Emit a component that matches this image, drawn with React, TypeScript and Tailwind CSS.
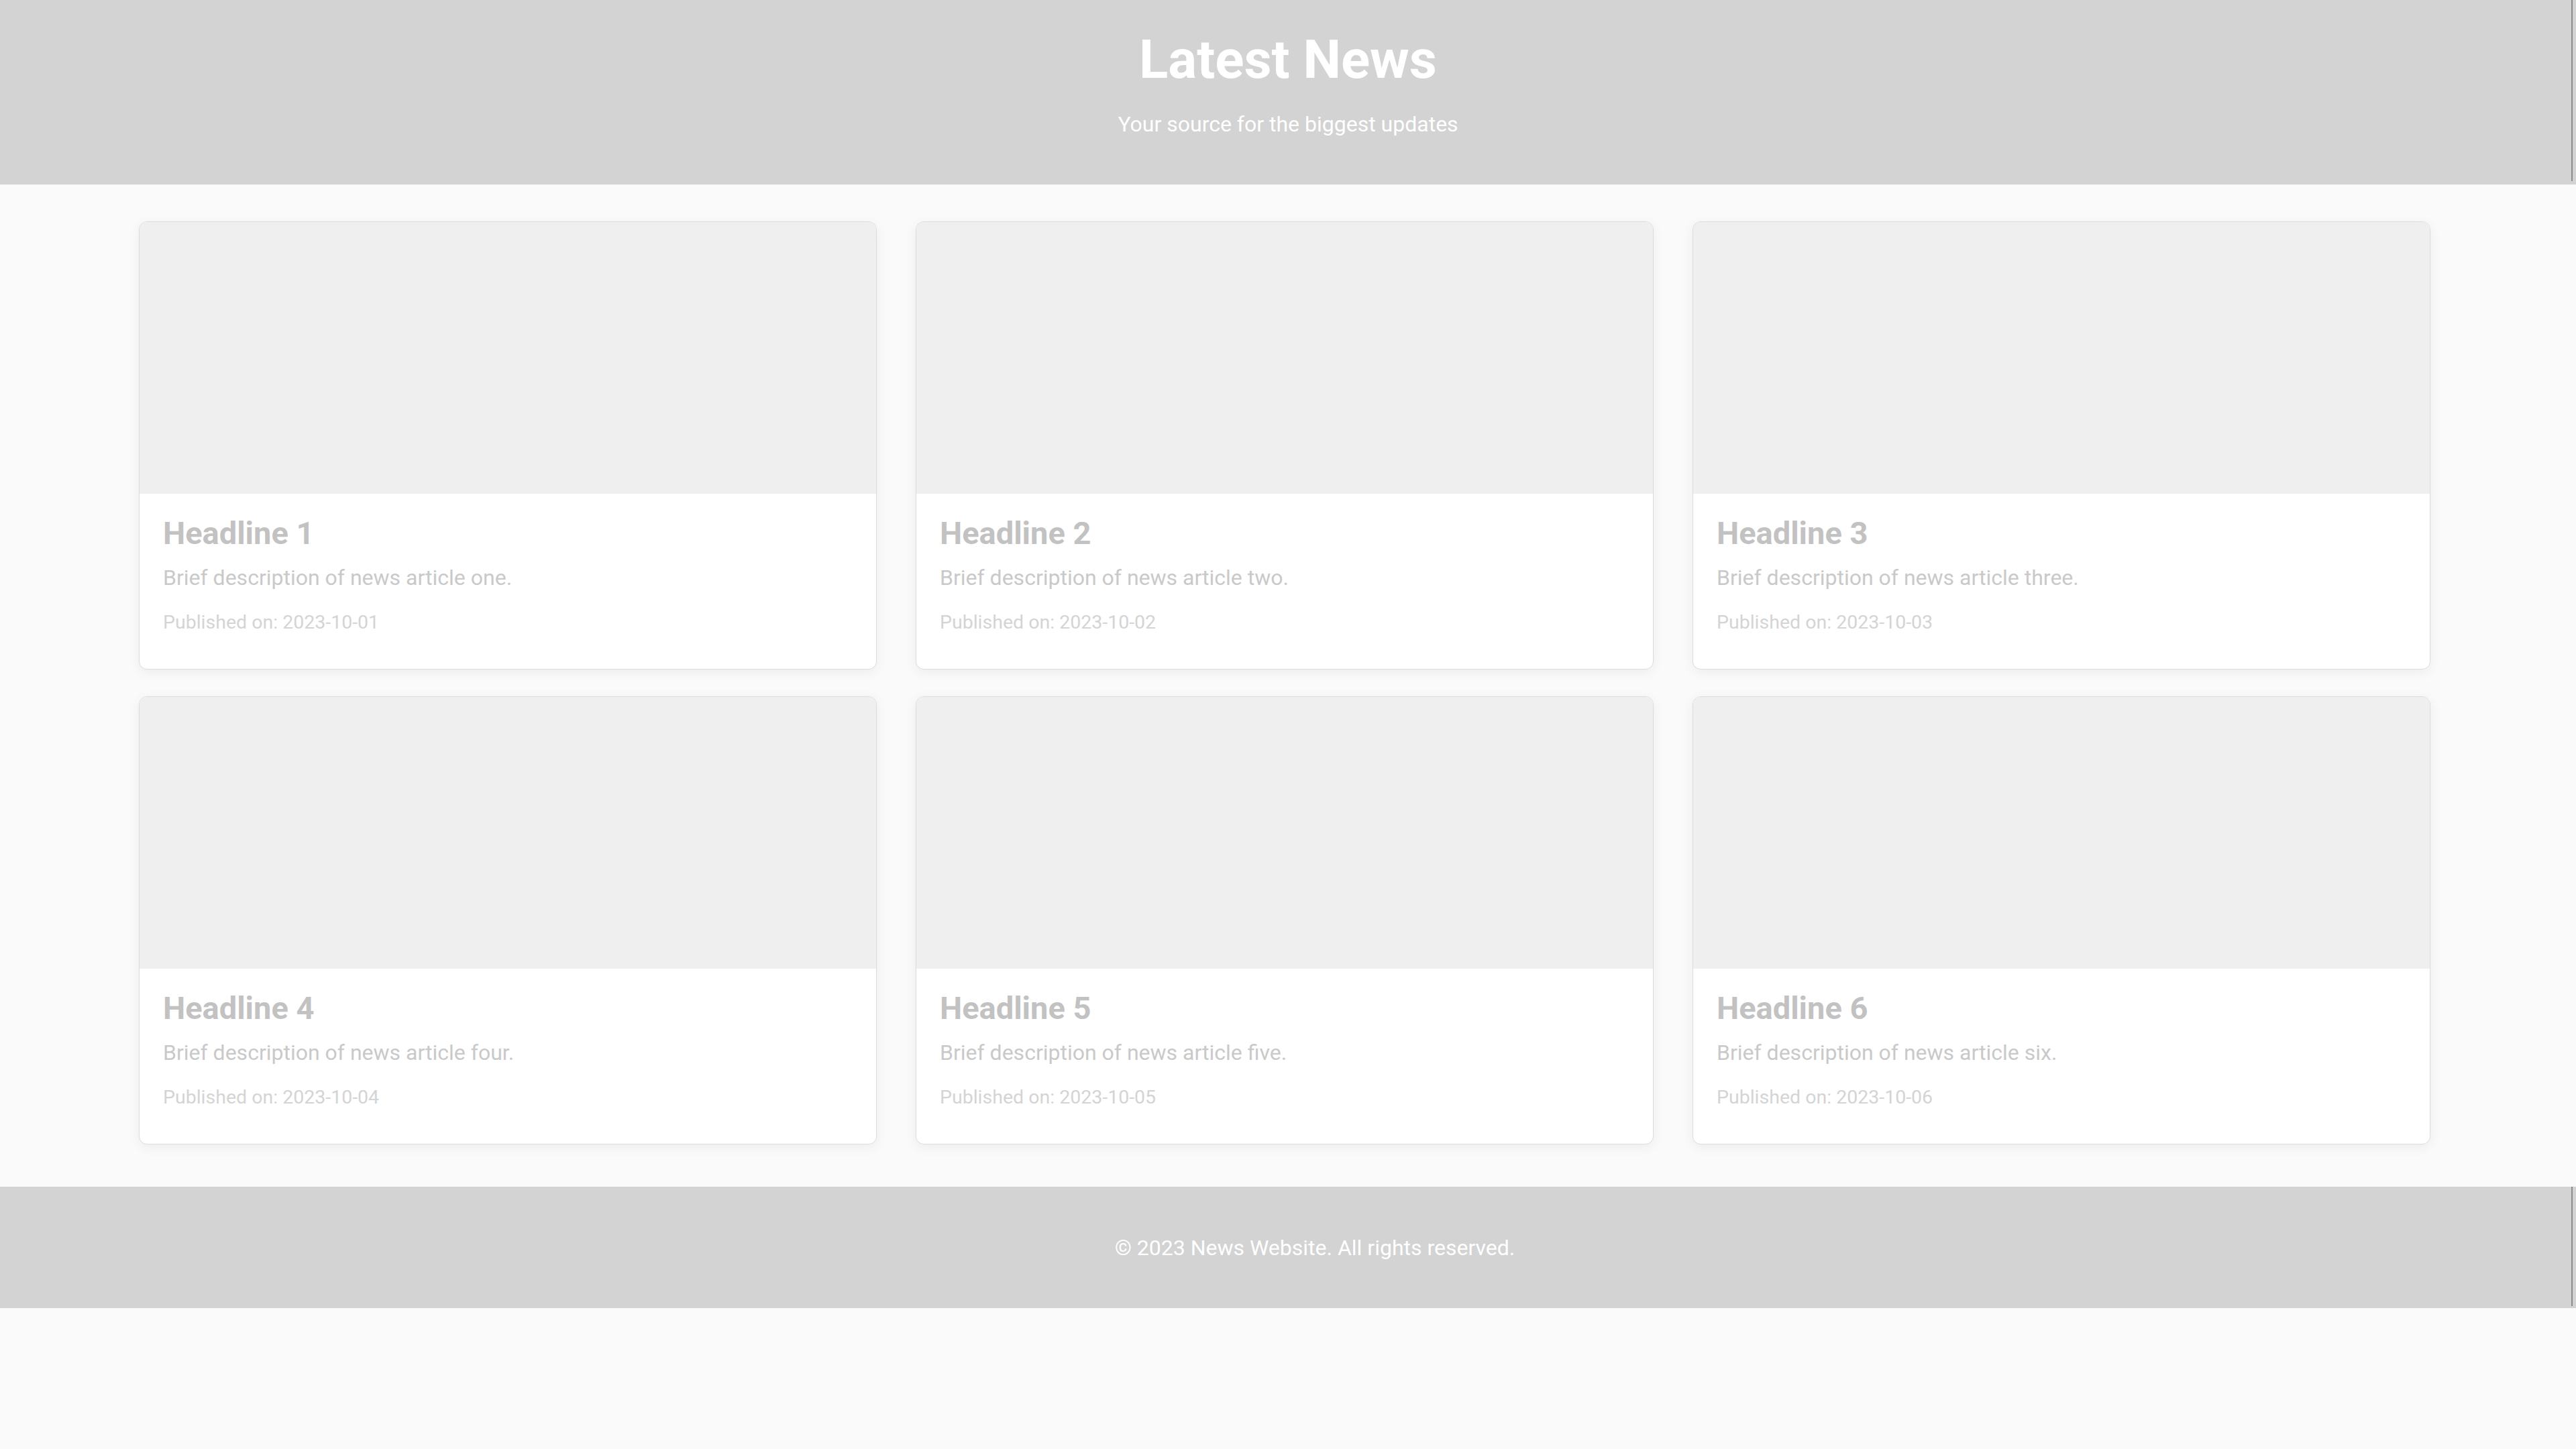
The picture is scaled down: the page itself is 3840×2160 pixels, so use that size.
import React from "react"

interface Article {
  id: number
  title: string
  summary: string
  date: string
}

const articles: Article[] = [
  { id: 1, title: "Headline 1", summary: "Brief description of news article one.", date: "2023-10-01" },
  { id: 2, title: "Headline 2", summary: "Brief description of news article two.", date: "2023-10-02" },
  { id: 3, title: "Headline 3", summary: "Brief description of news article three.", date: "2023-10-03" },
  { id: 4, title: "Headline 4", summary: "Brief description of news article four.", date: "2023-10-04" },
  { id: 5, title: "Headline 5", summary: "Brief description of news article five.", date: "2023-10-05" },
  { id: 6, title: "Headline 6", summary: "Brief description of news article six.", date: "2023-10-06" },
]

function NewsCard({ article }: { article: Article }) {
  return (
    <article className="bg-white border border-[#dcdcdc] rounded-xl overflow-hidden shadow-[0_4px_18px_rgba(0,0,0,0.06)]">
      {/* image placeholder */}
      <div className="h-[405px] bg-[#efefef]" />
      <div className="px-[35px] pt-[35px] pb-[55px]">
        <h2 className="text-[47px] leading-[48px] font-bold text-[#c2c2c2]">{article.title}</h2>
        <p className="mt-[26px] text-[32px] leading-[33px] text-[#c9c9c9]">{article.summary}</p>
        <p className="mt-[35px] text-[28.5px] leading-[29px] text-[#d4d4d4]">Published on: {article.date}</p>
      </div>
    </article>
  )
}

export default function App() {
  return (
    <div className="min-h-screen bg-[#fafafa] font-['Roboto',sans-serif]">
      <header className="relative h-[275px] bg-[#d3d3d3] text-white text-center pt-[49px]">
        <h1 className="text-[80px] leading-[80px] font-bold">Latest News</h1>
        <p className="mt-[40px] text-[32px] leading-[32px]">Your source for the biggest updates</p>
        <div className="absolute right-[5px] top-0 h-[270px] w-[2px] bg-[#8c8c8c]" />
      </header>

      <main className="pl-[207px] pr-[217px] pt-[55px] pb-[63px]">
        <div className="grid grid-cols-3 gap-x-[58px] gap-y-[40px]">
          {articles.map((a) => (
            <NewsCard key={a.id} article={a} />
          ))}
        </div>
      </main>

      <footer className="relative h-[181px] bg-[#d3d3d3] flex items-center justify-center pl-[80px]">
        <p className="text-[32px] leading-[32px] text-white">© 2023 News Website. All rights reserved.</p>
        <div className="absolute right-[5px] top-0 h-[178px] w-[2px] bg-[#8c8c8c]" />
      </footer>
    </div>
  )
}
